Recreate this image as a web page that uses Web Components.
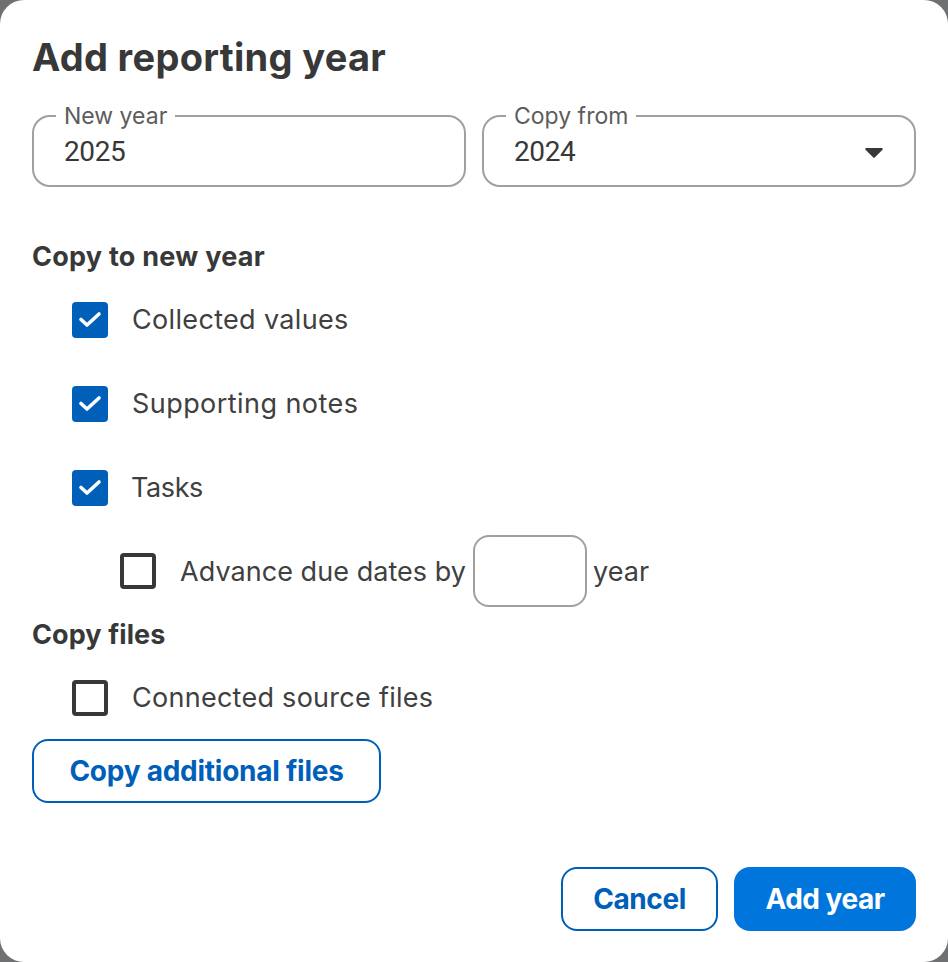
<!DOCTYPE html>
<html><head><meta charset="utf-8"><style>
html,body{margin:0;padding:0;background:#6f7072;height:962px;overflow:hidden}
body{font-family:"Inter","Liberation Sans",sans-serif;color:#383838}
</style></head><body>
<app-dialog>
  <span slot="title">Add reporting year</span>
  <div class="x" slot="fields">
    <outlined-field label="New year" value="2025"></outlined-field>
    <outlined-field label="Copy from" value="2024" select></outlined-field>
  </div>
  <section-head slot="body" style="margin-top:52px;letter-spacing:.25px">Copy to new year</section-head>
  <check-row slot="body" checked style="margin-top:27px;letter-spacing:.33px">Collected values</check-row>
  <check-row slot="body" checked style="margin-top:48px;letter-spacing:.44px">Supporting notes</check-row>
  <check-row slot="body" checked style="margin-top:48px;letter-spacing:-.4px"><span style="margin-left:-1px">Tasks</span></check-row>
  <check-row slot="body" nested style="margin-top:29px;letter-spacing:.05px"><span style="padding-top:2px">Advance due dates by</span><small-input></small-input><span style="padding-top:2px">year</span></check-row>
  <section-head slot="body" style="margin-top:10px;letter-spacing:.1px">Copy files</section-head>
  <check-row slot="body" style="margin-top:27px;letter-spacing:.27px">Connected source files</check-row>
  <ui-button slot="body" style="margin-top:23px;width:349px">Copy additional files</ui-button>
  <ui-button slot="actions" style="width:157px;letter-spacing:-.4px">Cancel</ui-button>
  <ui-button slot="actions" primary style="width:182px;letter-spacing:-.5px">Add year</ui-button>
</app-dialog>
<script>
const F='"Inter","Liberation Sans",sans-serif';
function def(name,html){customElements.define(name,class extends HTMLElement{
  connectedCallback(){if(this.shadowRoot)return;const r=this.attachShadow({mode:'open'});r.innerHTML=typeof html==='function'?html(this):html;}
});}
def('app-dialog',`<style>
:host{display:flex;flex-direction:column;box-sizing:border-box;width:948px;height:962px;background:#fff;border-radius:24px;padding:32px 32px 31px}
h1{margin:0;font:700 38px/50px ${F};letter-spacing:.3px;color:#383838}
.fields{display:block;margin-top:22px}
.body{display:flex;flex-direction:column;align-items:flex-start;flex:1}
.actions{display:flex;justify-content:flex-end;gap:16px}
::slotted(.x){display:grid;grid-template-columns:1fr 1fr;gap:16px}
</style><h1><slot name="title"></slot></h1><div class="fields"><slot name="fields"></slot></div><div class="body"><slot name="body"></slot></div><div class="actions"><slot name="actions"></slot></div>`);
def('outlined-field',t=>`<style>
:host{display:block}
fieldset{margin:0;padding:0 30px;height:83px;box-sizing:border-box;border:2px solid #a0a0a0;border-radius:18px;position:relative;display:flex}
legend{padding:0 8px;margin-left:-8px;font:400 23px/24px ${F};color:#5c5c5c;height:24px}
.v{font:400 28px/36px Roboto,${F};letter-spacing:-.4px;color:#383838;margin-top:6px}
svg{position:absolute;right:31px;top:20px}
</style><fieldset><legend>${t.getAttribute('label')}</legend><div class="v">${t.getAttribute('value')}</div>${t.hasAttribute('select')?'<svg width="18" height="10" viewBox="0 0 18 10"><path d="M1.2 0h15.6a1 1 0 0 1 .7 1.7L9.7 9.6a1 1 0 0 1-1.4 0L.5 1.7A1 1 0 0 1 1.2 0z" fill="#383838"/></svg>':''}</fieldset>`);
def('section-head',`<style>:host{display:block;font:700 27px/36px ${F};color:#383838}</style><slot></slot>`);
def('check-row',t=>{const c=t.hasAttribute('checked'),n=t.hasAttribute('nested');return `<style>
:host{display:flex;align-items:center;gap:24px;margin-left:${n?88:40}px;font:400 27px/36px ${F};color:#404040}
.box{flex:none;width:36px;height:36px;box-sizing:border-box;border-radius:4px;${c?'background:#0060b9':'border:4px solid #383838'};display:flex}
.l{display:flex;align-items:center;gap:6.5px}
</style><span class="box">${c?'<svg width="36" height="36" viewBox="0 0 36 36"><path d="M9 17.5l6 5.5L27 12" fill="none" stroke="#fff" stroke-width="3.6" stroke-linecap="round" stroke-linejoin="round"/></svg>':''}</span><span class="l"><slot></slot></span>`});
def('small-input',`<style>:host{display:block;box-sizing:border-box;width:114px;height:72px;border:2px solid #a0a0a0;border-radius:16px;background:#fff}</style>`);
def('ui-button',t=>{const p=t.hasAttribute('primary');return `<style>
:host{display:inline-flex;box-sizing:border-box;height:64px;align-items:center;justify-content:center;border-radius:16px;font:700 28px/36px ${F};letter-spacing:-.25px;${p?'background:#0075dc;color:#fff':'border:2px solid #0060b9;color:#0060b9;background:#fff'}}
</style><slot></slot>`});
</script>
</body></html>
